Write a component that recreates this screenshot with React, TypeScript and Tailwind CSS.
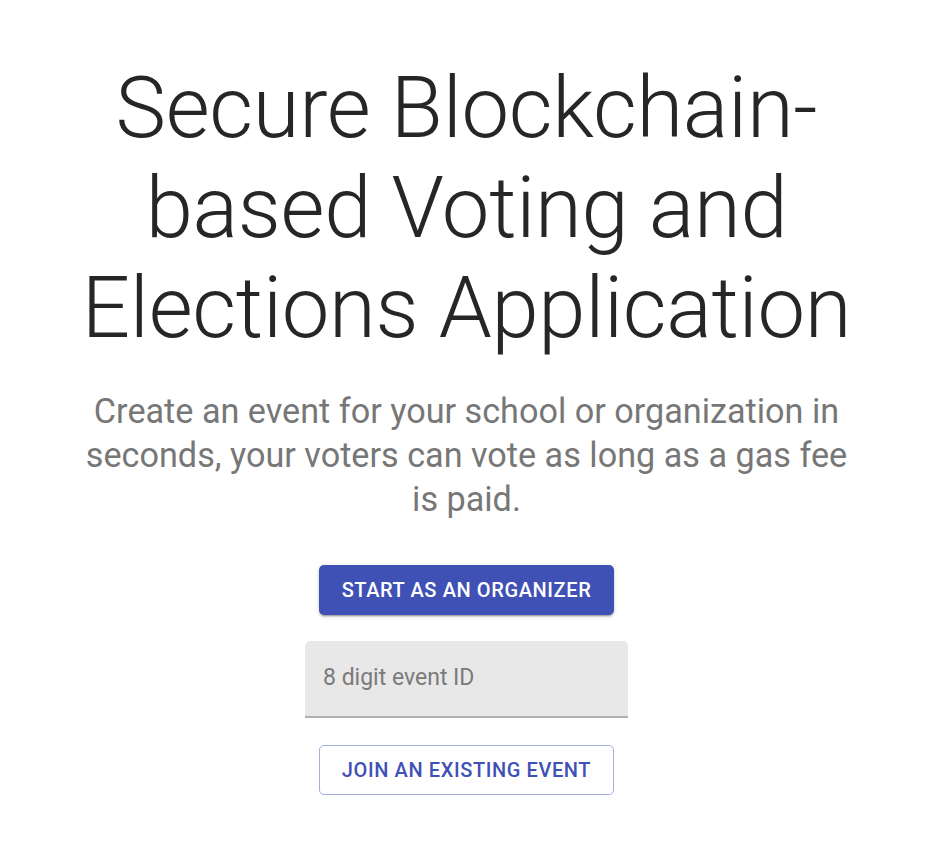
import React from "react";

export default function App() {
  return (
    <div className="w-[933px] bg-white pt-[58px] pb-[60px]" style={{ fontFamily: "Roboto, 'Liberation Sans', sans-serif" }}>
      <div className="flex flex-col items-center">
        <h1 className="w-[785px] text-center text-[85px] leading-[100px] font-light text-[#262626] tracking-[-0.3px]">
          Secure Blockchain-based Voting and Elections Application
        </h1>
        <p className="mt-[31px] w-[785px] text-center text-[34.2px] leading-[44px] font-normal text-[#777777]">
          Create an event for your school or organization in seconds, your voters can vote as long as a gas fee is paid.
        </p>
        <button className="mt-[44px] h-[50px] w-[295px] rounded-[5px] bg-[#3f51b5] text-[20px] font-medium uppercase tracking-[0.6px] text-white shadow-[0_3px_1px_-2px_rgba(0,0,0,0.2),0_2px_2px_0_rgba(0,0,0,0.14),0_1px_5px_0_rgba(0,0,0,0.12)]">
          Start as an Organizer
        </button>
        <div className="mt-[26px] h-[77px] w-[323px] rounded-t-[5px] bg-[#e8e8e8] border-b-2 border-[#b0b0b0] flex items-center pl-[18px]">
          <input
            placeholder="8 digit event ID"
            className="w-full bg-transparent text-[23px] text-[#212121] placeholder:text-[#7a7a7a] outline-none"
          />
        </div>
        <button className="mt-[27px] h-[50px] w-[295px] rounded-[5px] border border-[#a5ade0] bg-white text-[20px] font-medium uppercase tracking-[0.6px] text-[#3f51b5]">
          Join an Existing Event
        </button>
      </div>
    </div>
  );
}
